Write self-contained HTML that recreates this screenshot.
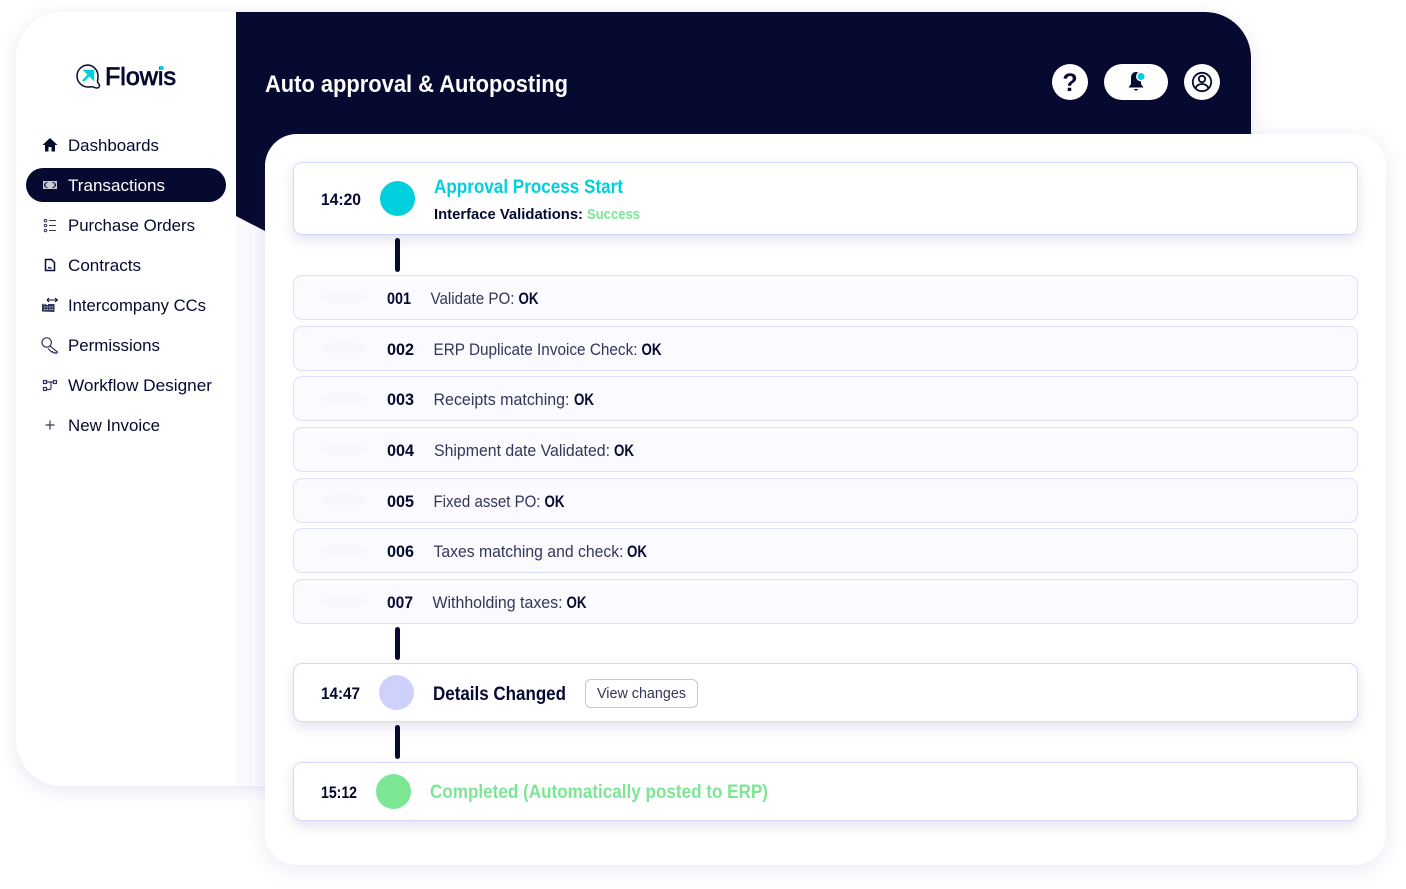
<!DOCTYPE html>
<html><head><meta charset="utf-8"><style>
html,body{margin:0;padding:0;width:1406px;height:889px;overflow:hidden;background:#fff}
.a{position:absolute;box-sizing:border-box}
.row{left:293px;width:1064.5px;height:45px;background:#fafaff;border:1.5px solid #dcdffd;border-radius:9px}
.card{left:293px;width:1064.5px;background:#fff;border:1.5px solid #d5d8fc;border-radius:9px;box-shadow:0 5px 12px rgba(60,60,130,.15)}
.bar{left:395px;width:5px;background:#060930;border-radius:3px}
.dot{border-radius:50%;width:35px;height:35px}
.el{left:321px;width:46px;height:13px;border-radius:50%;background:#f7f8fe}
svg{position:absolute;left:0;top:0}
text{font-family:"Liberation Sans",sans-serif;fill:#060930}
.n{font-size:17px}.r{font-size:16.5px;fill:#33365a}.k{fill:#060930;font-weight:700;font-size:17px}
</style></head><body>
<div class="a" style="left:16px;top:12px;width:1235px;height:774px;background:#fff;border-radius:46px;box-shadow:0 4px 18px rgba(70,70,170,.13)"></div>
<div class="a" style="left:236px;top:12px;width:1015px;height:774px;background:#f9f9fe;border-radius:0 46px 0 0"></div>
<div class="a" style="left:236px;top:12px;width:1015px;height:219px;background:#060930;border-radius:0 46px 0 0;clip-path:polygon(0 0,100% 0,100% 100%,29px 100%,0 204px)"></div>
<div class="a" style="left:26px;top:168px;width:200px;height:34px;background:#060930;border-radius:17px"></div>
<div class="a" style="left:265px;top:134px;width:1121px;height:731px;background:#fff;border-radius:32px;box-shadow:0 4px 22px rgba(70,70,170,.12)"></div>
<div class="a card" style="top:162px;height:73px"></div>
<div class="a bar" style="top:238px;height:34px"></div>
<div class="a row" style="top:275px"></div><div class="a row" style="top:325.500px"></div><div class="a row" style="top:376px"></div><div class="a row" style="top:427px"></div><div class="a row" style="top:477.500px"></div><div class="a row" style="top:528px"></div><div class="a row" style="top:579px"></div>
<div class="a el" style="top:291px"></div><div class="a el" style="top:341px"></div><div class="a el" style="top:392px"></div><div class="a el" style="top:443px"></div><div class="a el" style="top:493px"></div><div class="a el" style="top:544px"></div><div class="a el" style="top:595px"></div>
<div class="a bar" style="top:627px;height:33px"></div>
<div class="a card" style="top:663px;height:59px"></div>
<div class="a bar" style="top:725px;height:34px"></div>
<div class="a card" style="top:762px;height:59px"></div>
<div class="a dot" style="left:380px;top:181px;background:#00cfdd"></div>
<div class="a dot" style="left:379px;top:675px;background:#cdd1fb"></div>
<div class="a dot" style="left:376px;top:774px;background:#7ce695"></div>
<div class="a" style="left:585px;top:678.500px;width:113px;height:29px;border:1.5px solid #c5c6dc;border-radius:6px;background:#fff"></div>
<div class="a" style="left:1052px;top:64px;width:36px;height:36px;background:#fff;border-radius:50%"></div>
<div class="a" style="left:1104px;top:64px;width:64px;height:36px;background:#fff;border-radius:18px"></div>
<div class="a" style="left:1184px;top:64px;width:36px;height:36px;background:#fff;border-radius:50%"></div>
<svg width="1406" height="889" viewBox="0 0 1406 889" xmlns="http://www.w3.org/2000/svg">
<path d="M88 65a11 11 0 1 0 0 22c2 0 3-.4 4.500-.2 1.500.3 2.500 1.300 4.500 1.200 2-.1 3-1.800 2.300-3.300-.6-1.300-1.800-1.900-1.800-3.200 0-1.200.5-2.200.5-5.500a11 11 0 0 0-10-11z" fill="none" stroke="#060930" stroke-width="1.500"/>
<path d="M83 81l8-8M85.500 71h7.500v7.500z" stroke="#00cfdd" stroke-width="2.500" fill="#00cfdd"/>
<text x="105" y="85" font-size="25" textLength="71" lengthAdjust="spacingAndGlyphs" stroke="#060930" stroke-width=".8">Flowis</text>
<circle cx="161.700" cy="68" r="2.100" fill="#00cfdd"/>
<text x="68" y="151" class="n" textLength="91" lengthAdjust="spacingAndGlyphs">Dashboards</text>
<text x="68" y="191" class="n" style="fill:#fff" textLength="97" lengthAdjust="spacingAndGlyphs">Transactions</text>
<text x="68" y="231" class="n" textLength="127" lengthAdjust="spacingAndGlyphs">Purchase Orders</text>
<text x="68" y="271" class="n" textLength="73" lengthAdjust="spacingAndGlyphs">Contracts</text>
<text x="68" y="311" class="n" textLength="138" lengthAdjust="spacingAndGlyphs">Intercompany CCs</text>
<text x="68" y="351" class="n" textLength="92" lengthAdjust="spacingAndGlyphs">Permissions</text>
<text x="68" y="391" class="n" textLength="144" lengthAdjust="spacingAndGlyphs">Workflow Designer</text>
<text x="68" y="431" class="n" textLength="92" lengthAdjust="spacingAndGlyphs">New Invoice</text>
<path d="M50 138l7.500 7H55v6.500h-3.500v-4.500h-3v4.500H45V145h-2.500z" fill="#060930"/>
<rect x="43" y="181" width="14" height="8" fill="#c9cad6"/><path d="M47.500 182.500a3 2.500 0 0 0 0 5M52.500 182.500a3 2.500 0 0 1 0 5M45 183.500v3M55 183.500v3" fill="none" stroke="#060930" stroke-width="1"/>
<g fill="none" stroke="#33365a" stroke-width="1"><circle cx="45.500" cy="220.500" r="1.300"/><circle cx="45.500" cy="225.500" r="1.300"/><circle cx="45.500" cy="230.500" r="1.300"/><path d="M49 220.500h7M49 225.500h7M49 230.500h7"/></g>
<path d="M45.500 259.500h6l3 3v8h-9z" fill="none" stroke="#060930" stroke-width="1.500"/><path d="M47.500 268.500l1.500-2 1 1 1-.5 1 1.500z" fill="#060930"/>
<path d="M42 311.500v-8l2.500 1.500v-1.500l2.500 1.500 1 0v-1h6.500v8z" fill="#33365a"/><path d="M47 300h10m-2-2l2.500 2-2.500 2M47 300l2-2m-2 2l2 2" fill="none" stroke="#060930" stroke-width="1"/><path d="M44 307h9M44 309.500h9" stroke="#fff" stroke-width=".8" stroke-dasharray="1.500 1"/>
<g fill="none" stroke="#33365a" stroke-width="1.200"><circle cx="46.700" cy="342.500" r="4.700"/><path d="M50 346l7.500 6-1.500 1.500-1.500-1-1 .5-1-1.500-1 .5-3.500-3.500"/></g>
<g fill="none" stroke="#33365a" stroke-width="1.200"><rect x="43.500" y="380.500" width="3" height="3"/><rect x="43.500" y="387.500" width="3" height="3"/><rect x="53.500" y="380.500" width="3" height="3"/><path d="M46.500 382h4.500v6a1.500 1.500 0 0 1-1.500 1.500h-3M48 382h5.500"/></g>
<path d="M50 420.500v9M45.500 425h9" stroke="#33365a" stroke-width="1.200" fill="none"/>
<text x="265" y="92" font-size="24" font-weight="700" style="fill:#fff" textLength="303" lengthAdjust="spacingAndGlyphs">Auto approval &amp; Autoposting</text>
<text x="1070" y="91" text-anchor="middle" font-size="25" font-weight="700">?</text>
<path d="M1136 72c-3.500 0-5 3-5 6v6l-2.500 3.500h15L1141 84v-6c0-3-1.500-6-5-6z" fill="#060930"/><path d="M1133.500 89h5l-2.500 2z" fill="#060930"/><circle cx="1141" cy="76.500" r="5" fill="#fff"/><circle cx="1141" cy="76.500" r="3.500" fill="#00cfdd"/>
<g fill="none" stroke="#060930" stroke-width="1.800"><circle cx="1202" cy="82" r="9.200"/><circle cx="1202" cy="79" r="3.200"/><path d="M1195.500 88.500c1-3 3.500-4.500 6.500-4.500s5.500 1.500 6.500 4.500"/></g>
<text x="321" y="205" font-size="17" font-weight="700" textLength="40" lengthAdjust="spacingAndGlyphs">14:20</text>
<text x="434" y="193" font-size="19.500" font-weight="700" style="fill:#00cfdd" textLength="189" lengthAdjust="spacingAndGlyphs">Approval Process Start</text>
<text x="434" y="219" font-size="14.500" font-weight="700" textLength="149" lengthAdjust="spacingAndGlyphs">Interface Validations:</text>
<text x="587" y="219" font-size="14.500" font-weight="700" style="fill:#7ce695" textLength="53" lengthAdjust="spacingAndGlyphs">Success</text>
<text x="387" y="304" class="k" textLength="24" lengthAdjust="spacingAndGlyphs">001</text><text x="430.500" y="304" class="r" textLength="84" lengthAdjust="spacingAndGlyphs">Validate PO:</text><text x="518.500" y="304" class="k" textLength="20" lengthAdjust="spacingAndGlyphs">OK</text>
<text x="387" y="355" class="k" textLength="27" lengthAdjust="spacingAndGlyphs">002</text><text x="433.500" y="355" class="r" textLength="204" lengthAdjust="spacingAndGlyphs">ERP Duplicate Invoice Check:</text><text x="641.500" y="355" class="k" textLength="20" lengthAdjust="spacingAndGlyphs">OK</text>
<text x="387" y="405" class="k" textLength="27" lengthAdjust="spacingAndGlyphs">003</text><text x="433.500" y="405" class="r" textLength="136" lengthAdjust="spacingAndGlyphs">Receipts matching:</text><text x="574" y="405" class="k" textLength="20" lengthAdjust="spacingAndGlyphs">OK</text>
<text x="387" y="456" class="k" textLength="27" lengthAdjust="spacingAndGlyphs">004</text><text x="434" y="456" class="r" textLength="176" lengthAdjust="spacingAndGlyphs">Shipment date Validated:</text><text x="614" y="456" class="k" textLength="20" lengthAdjust="spacingAndGlyphs">OK</text>
<text x="387" y="507" class="k" textLength="27" lengthAdjust="spacingAndGlyphs">005</text><text x="433.500" y="507" class="r" textLength="107" lengthAdjust="spacingAndGlyphs">Fixed asset PO:</text><text x="544.500" y="507" class="k" textLength="20" lengthAdjust="spacingAndGlyphs">OK</text>
<text x="387" y="557" class="k" textLength="27" lengthAdjust="spacingAndGlyphs">006</text><text x="433.500" y="557" class="r" textLength="190" lengthAdjust="spacingAndGlyphs">Taxes matching and check:</text><text x="627" y="557" class="k" textLength="20" lengthAdjust="spacingAndGlyphs">OK</text>
<text x="387" y="608" class="k" textLength="26" lengthAdjust="spacingAndGlyphs">007</text><text x="432.500" y="608" class="r" textLength="130" lengthAdjust="spacingAndGlyphs">Withholding taxes:</text><text x="566.500" y="608" class="k" textLength="20" lengthAdjust="spacingAndGlyphs">OK</text>
<text x="321" y="699" font-size="17" font-weight="700" textLength="39" lengthAdjust="spacingAndGlyphs">14:47</text>
<text x="433" y="700" font-size="19" font-weight="700" textLength="133" lengthAdjust="spacingAndGlyphs">Details Changed</text>
<text x="597" y="698" font-size="15" style="fill:#33365a" textLength="89" lengthAdjust="spacingAndGlyphs">View changes</text>
<text x="321" y="798" font-size="17" font-weight="700" textLength="36" lengthAdjust="spacingAndGlyphs">15:12</text>
<text x="430" y="798" font-size="19" font-weight="700" style="fill:#7ce695" textLength="338" lengthAdjust="spacingAndGlyphs">Completed (Automatically posted to ERP)</text>
</svg>
</body></html>
